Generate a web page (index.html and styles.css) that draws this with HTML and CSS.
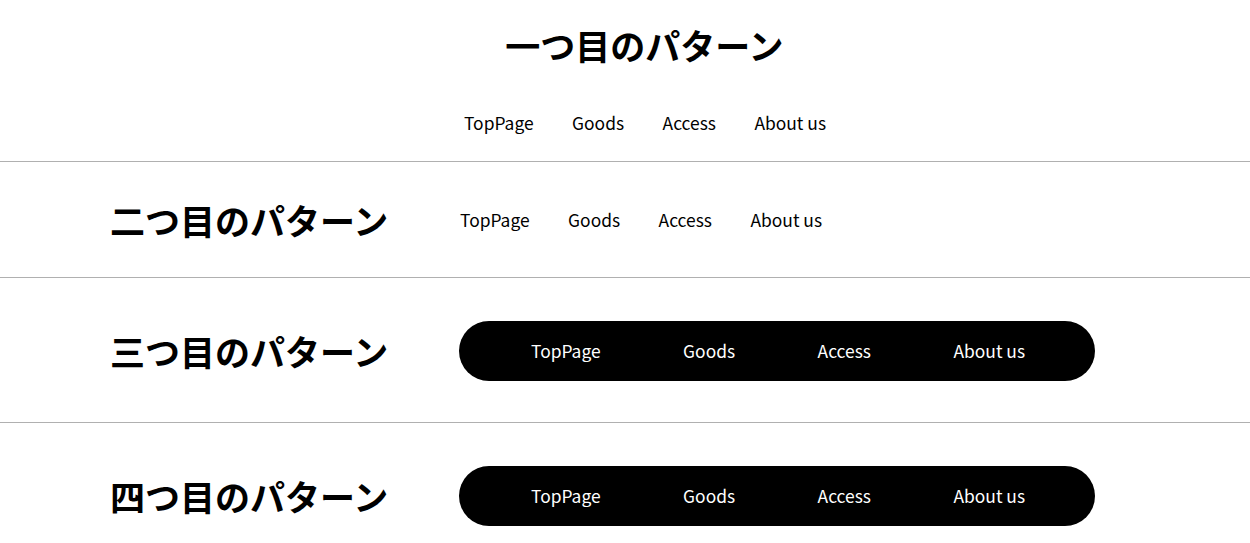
FILE: index.html
```html
<!DOCTYPE html>
<html lang="ja">
<head>
<meta charset="utf-8">
<title>ヘッダーパターン</title>
<link rel="stylesheet" href="styles.css">
</head>
<body>
<header class="pattern pattern-one">
  <h1 class="title">一つ目のパターン</h1>
  <nav>
    <ul class="menu">
      <li><a href="#">TopPage</a></li>
      <li><a href="#">Goods</a></li>
      <li><a href="#">Access</a></li>
      <li><a href="#">About us</a></li>
    </ul>
  </nav>
</header>
<header class="pattern pattern-two">
  <h1 class="title">二つ目のパターン</h1>
  <nav>
    <ul class="menu">
      <li><a href="#">TopPage</a></li>
      <li><a href="#">Goods</a></li>
      <li><a href="#">Access</a></li>
      <li><a href="#">About us</a></li>
    </ul>
  </nav>
</header>
<header class="pattern pattern-pill">
  <h1 class="title">三つ目のパターン</h1>
  <nav>
    <ul class="menu menu-pill">
      <li><a href="#">TopPage</a></li>
      <li><a href="#">Goods</a></li>
      <li><a href="#">Access</a></li>
      <li><a href="#">About us</a></li>
    </ul>
  </nav>
</header>
<header class="pattern pattern-pill">
  <h1 class="title">四つ目のパターン</h1>
  <nav>
    <ul class="menu menu-pill">
      <li><a href="#">TopPage</a></li>
      <li><a href="#">Goods</a></li>
      <li><a href="#">Access</a></li>
      <li><a href="#">About us</a></li>
    </ul>
  </nav>
</header>
</body>
</html>
```
FILE: styles.css
```css
* {
  box-sizing: border-box;
}

html, body {
  margin: 0;
  padding: 0;
  background: #ffffff;
  color: #000000;
  font-family: "Noto Sans CJK JP", "Noto Sans", sans-serif;
}

.pattern {
  border-bottom: 1px solid #b0b0b0;
}

.title {
  margin: 0;
  font-size: 35px;
  font-weight: 700;
  line-height: 50px;
  white-space: nowrap;
}

.menu {
  list-style: none;
  margin: 0;
  padding: 0;
  display: flex;
  align-items: center;
  gap: 38.5px;
}

.menu a {
  display: block;
  color: #000000;
  text-decoration: none;
  font-size: 17.4px;
  line-height: 30px;
  white-space: nowrap;
}

/* pattern 1: stacked and centred */
.pattern-one {
  height: 162px;
  padding-top: 20px;
  display: flex;
  flex-direction: column;
  align-items: center;
  padding-left: 40px;
}

.pattern-one .title {
  margin-left: -1px;
}

.pattern-one nav {
  margin-top: 38px;
}

/* pattern 2: title and links in a row */
.pattern-two {
  height: 116px;
  display: flex;
  align-items: center;
  padding-left: 110px;
  gap: 70px;
}

.pattern-two .title {
  width: 280px;
}

/* patterns 3 and 4: links in a black pill */
.pattern-pill {
  height: 145px;
  display: flex;
  align-items: center;
  padding-left: 110px;
  padding-top: 2px;
  gap: 69px;
}

.pattern-pill:last-child {
  border-bottom: none;
  padding-top: 1px;
}

.pattern-pill .title {
  width: 280px;
}

.menu-pill {
  height: 60px;
  width: 636px;
  padding: 0 71px 0 72px;
  gap: 82.5px;
  background: #000000;
  border-radius: 30px;
}

.menu-pill a {
  color: #ffffff;
}
```
